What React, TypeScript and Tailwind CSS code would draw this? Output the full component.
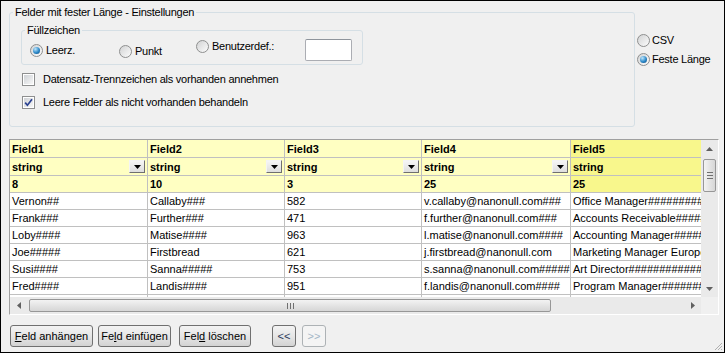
import React from 'react'

// ---------------------------- grid data ----------------------------
const columns = [
    { id: 1, name: 'Field1', len: '8', w: 'w-[138px]', hl: false },
    { id: 2, name: 'Field2', len: '10', w: 'w-[137px]', hl: false },
    { id: 3, name: 'Field3', len: '3', w: 'w-[137px]', hl: false },
    { id: 4, name: 'Field4', len: '25', w: 'w-[149px]', hl: false },
    { id: 5, name: 'Field5', len: '25', w: 'w-[200px]', hl: true },
]

const rows: string[][] = [
    ['Vernon##', 'Callaby###', '582', 'v.callaby@nanonull.com###', 'Office Manager###########'],
    ['Frank###', 'Further###', '471', 'f.further@nanonull.com###', 'Accounts Receivable######'],
    ['Loby####', 'Matise####', '963', 'l.matise@nanonull.com####', 'Accounting Manager#######'],
    ['Joe#####', 'Firstbread', '621', 'j.firstbread@nanonull.com', 'Marketing Manager Europe#'],
    ['Susi####', 'Sanna#####', '753', 's.sanna@nanonull.com#####', 'Art Director#############'],
    ['Fred####', 'Landis####', '951', 'f.landis@nanonull.com####', 'Program Manager##########'],
    ['', '', '', '', ''],
]

// ---------------------------- small controls ----------------------------
function Radio({ on }: { on?: boolean }) {
    return (
        <span className="flex h-[13px] w-[13px] shrink-0 items-center justify-center rounded-full border border-[#8e8f8f] bg-linear-to-br from-[#d2d3d4] to-[#fcfcfc]">
            {on && (
                <span className="h-[7px] w-[7px] rounded-full bg-[radial-gradient(circle_at_35%_30%,#bfe6fc,#2b88c8_55%,#0b4479)]" />
            )}
        </span>
    )
}

function Check({ on }: { on?: boolean }) {
    return (
        <span className="flex h-[13px] w-[13px] shrink-0 border border-[#8e8f8f] bg-white p-[1px]">
            <span className="flex h-full w-full items-center justify-center bg-linear-to-br from-[#cfd2d6] to-[#f7f7f7]">
                {on && (
                    <svg width="9" height="9" viewBox="0 0 9 9">
                        <path d="M1.2 4.6 L3.4 7.2 L8 1.2" fill="none" stroke="#2a4191" strokeWidth="1.7" />
                    </svg>
                )}
            </span>
        </span>
    )
}

function DropBtn() {
    return (
        <span className="ml-auto mr-[2px] flex h-[13px] w-[16px] shrink-0 items-center justify-center border border-t-[#f4f4f4] border-l-[#f4f4f4] border-r-[#6f6f6f] border-b-[#6f6f6f] bg-linear-to-b from-[#f6f6f6] to-[#dedede]">
            <svg width="7" height="4" viewBox="0 0 7 4">
                <path d="M0 0h7L3.5 4z" fill="#000" />
            </svg>
        </span>
    )
}

function Arrow({ dir }: { dir: 'up' | 'down' | 'left' | 'right' }) {
    const d = {
        up: 'M0 4h7L3.5 0z',
        down: 'M0 0h7L3.5 4z',
        left: 'M4 0v7L0 3.5z',
        right: 'M0 0v7L4 3.5z',
    }[dir]
    const vert = dir === 'up' || dir === 'down'
    return (
        <svg width={vert ? 7 : 4} height={vert ? 4 : 7} viewBox={vert ? '0 0 7 4' : '0 0 4 7'}>
            <path d={d} fill="#606060" />
        </svg>
    )
}

function Btn({ children, w, disabled }: { children: React.ReactNode; w: string; disabled?: boolean }) {
    return (
        <button
            type="button"
            className={`${w} flex h-[22px] items-center justify-center rounded-[3px] border ${
                disabled
                    ? 'border-[#adb2b5] bg-[#f4f4f4] text-[#a3b4c6]'
                    : 'border-[#707070] bg-linear-to-b from-[#f3f3f3] via-[#e6e6e6] to-[#d3d3d3] text-black'
            }`}
        >
            <span className="whitespace-pre">{children}</span>
        </button>
    )
}

// ---------------------------- grid ----------------------------
function Grid() {
    return (
        <div className="ml-[8px] mt-[12px] flex h-[176px] w-[710px] flex-col border border-t-[#a0a0a0] border-l-[#a0a0a0] border-r-white border-b-white shadow-[inset_1px_1px_0_#696969]">
            <div className="flex h-[157px]">
                <div className="w-[691px] overflow-hidden bg-white">
                    <div className="flex w-max">
                        {columns.map(({ id, name, w, hl }) => (
                            <div
                                key={id}
                                className={`${w} flex h-[18px] shrink-0 items-center border-r border-b border-[#c0c0c0] px-[2px] font-bold ${
                                    hl ? 'bg-[#f8f78c]' : 'bg-[#ffffc2]'
                                }`}
                            >
                                {name}
                            </div>
                        ))}
                    </div>
                    <div className="flex w-max">
                        {columns.map(({ id, w, hl }) => (
                            <div
                                key={id}
                                className={`${w} flex h-[18px] shrink-0 items-center border-r border-b border-[#c0c0c0] pl-[2px] font-bold ${
                                    hl ? 'bg-[#f8f78c]' : 'bg-[#ffffc2]'
                                }`}
                            >
                                string
                                {!hl && <DropBtn />}
                            </div>
                        ))}
                    </div>
                    <div className="flex w-max">
                        {columns.map(({ id, len, w, hl }) => (
                            <div
                                key={id}
                                className={`${w} flex h-[17px] shrink-0 items-center border-r border-b border-[#c0c0c0] px-[2px] font-bold ${
                                    hl ? 'bg-[#f8f78c]' : 'bg-[#ffffc2]'
                                }`}
                            >
                                {len}
                            </div>
                        ))}
                    </div>
                    {rows.map((row, i) => (
                        <div key={i} className="flex w-max">
                            {row.map((cell, j) => (
                                <div
                                    key={j}
                                    className={`${columns[j].w} flex h-[17px] shrink-0 items-center overflow-hidden whitespace-nowrap border-r border-b border-[#c0c0c0] px-[2px]`}
                                >
                                    {cell}
                                </div>
                            ))}
                        </div>
                    ))}
                </div>
                {/* vertical scrollbar */}
                <div className="flex w-[17px] flex-col bg-[#eaeaea]">
                    <div className="flex h-[17px] items-center justify-center">
                        <Arrow dir="up" />
                    </div>
                    <div className="mx-[2px] mt-[2px] flex h-[33px] flex-col items-center justify-center gap-[2px] rounded-[2px] border border-[#979797] bg-linear-to-r from-[#f3f3f3] to-[#d6d6d6]">
                        <span className="h-px w-[6px] bg-[#707070]" />
                        <span className="h-px w-[6px] bg-[#707070]" />
                        <span className="h-px w-[6px] bg-[#707070]" />
                    </div>
                    <div className="flex-1" />
                    <div className="flex h-[17px] items-center justify-center">
                        <Arrow dir="down" />
                    </div>
                </div>
            </div>
            {/* horizontal scrollbar */}
            <div className="flex h-[17px]">
                <div className="flex w-[691px] items-center bg-[#eaeaea]">
                    <div className="flex h-[17px] w-[17px] items-center justify-center">
                        <Arrow dir="left" />
                    </div>
                    <div className="ml-[2px] flex h-[13px] w-[522px] items-center justify-center gap-[2px] rounded-[2px] border border-[#979797] bg-linear-to-b from-[#f3f3f3] to-[#d6d6d6]">
                        <span className="h-[6px] w-px bg-[#707070]" />
                        <span className="h-[6px] w-px bg-[#707070]" />
                        <span className="h-[6px] w-px bg-[#707070]" />
                    </div>
                    <div className="flex-1" />
                    <div className="flex h-[17px] w-[17px] items-center justify-center">
                        <Arrow dir="right" />
                    </div>
                </div>
                <div className="w-[17px] bg-[#f0f0f0]" />
            </div>
        </div>
    )
}

// ---------------------------- main ----------------------------
export default function App() {
    return (
        <div className="h-[354px] w-[727px] bg-white">
            <div className="relative flex h-[353px] w-[725px] flex-col border border-black bg-[#f0f0f0] font-['Liberation_Sans',Arial,sans-serif] text-[11px] leading-[14px] text-black">
                <div className="flex items-start tracking-[-0.25px]">
                    <fieldset className="ml-[8px] mt-[4px] h-[122px] w-[626px] rounded-[3px] border border-[#d5dfe5]">
                        <legend className="ml-[3px] px-[2px] leading-[14px]">Felder mit fester Länge - Einstellungen</legend>

                        <fieldset className="ml-[11px] mt-[4px] h-[42px] w-[342px] rounded-[3px] border border-[#d5dfe5]">
                            <legend className="ml-[3px] px-[2px] leading-[14px]">Füllzeichen</legend>
                            <div className="flex items-start pl-[8px]">
                                <label className="mt-[6px] flex h-[14px] w-[89px] items-center gap-[3px]">
                                    <Radio on />
                                    Leerz.
                                </label>
                                <label className="mt-[7px] flex h-[14px] w-[77px] items-center gap-[3px]">
                                    <Radio />
                                    Punkt
                                </label>
                                <label className="mt-[2px] flex h-[14px] w-[109px] items-center gap-[3px]">
                                    <Radio />
                                    Benutzerdef.:
                                </label>
                                <div className="mt-[2px] h-[22px] w-[47px] rounded-[2px] border border-[#abadb3] border-t-[#8e949c] bg-white" />
                            </div>
                        </fieldset>

                        <label className="ml-[12px] mt-[7px] flex h-[14px] items-center gap-[8px]">
                            <Check />
                            Datensatz-Trennzeichen als vorhanden annehmen
                        </label>
                        <label className="ml-[12px] mt-[9px] flex h-[14px] items-center gap-[8px]">
                            <Check on />
                            Leere Felder als nicht vorhanden behandeln
                        </label>
                    </fieldset>

                    <div className="ml-[2px] mt-[32px] flex flex-col gap-[5px]">
                        <label className="flex h-[14px] items-center gap-[2px]">
                            <Radio />
                            CSV
                        </label>
                        <label className="flex h-[14px] items-center gap-[2px]">
                            <Radio on />
                            Feste Länge
                        </label>
                    </div>
                </div>

                <Grid />

                <div className="ml-[9px] mt-[10px] flex items-center">
                    <Btn w="w-[83px]">
                        <span className="underline underline-offset-[1px]">F</span>eld anhängen
                    </Btn>
                    <div className="ml-[5px]">
                        <Btn w="w-[73px]">
                            Fe<span className="underline underline-offset-[1px]">l</span>d einfügen
                        </Btn>
                    </div>
                    <div className="ml-[8px]">
                        <Btn w="w-[72px]">
                            Fel<span className="underline underline-offset-[1px]">d</span> löschen
                        </Btn>
                    </div>
                    <div className="ml-[21px]">
                        <Btn w="w-[24px]">
                            <span className="text-[#2a3a5a]">&lt;&lt;</span>
                        </Btn>
                    </div>
                    <div className="ml-[6px]">
                        <Btn w="w-[24px]" disabled>
                            &gt;&gt;
                        </Btn>
                    </div>
                </div>

                {/* resize grip */}
                <svg className="absolute right-[1px] bottom-[1px]" width="10" height="10" viewBox="0 0 10 10">
                    <path d="M9 2L2 9M9 5L5 9M9 8L8 9" stroke="#b0b0b0" strokeWidth="1" />
                </svg>
            </div>
        </div>
    )
}
